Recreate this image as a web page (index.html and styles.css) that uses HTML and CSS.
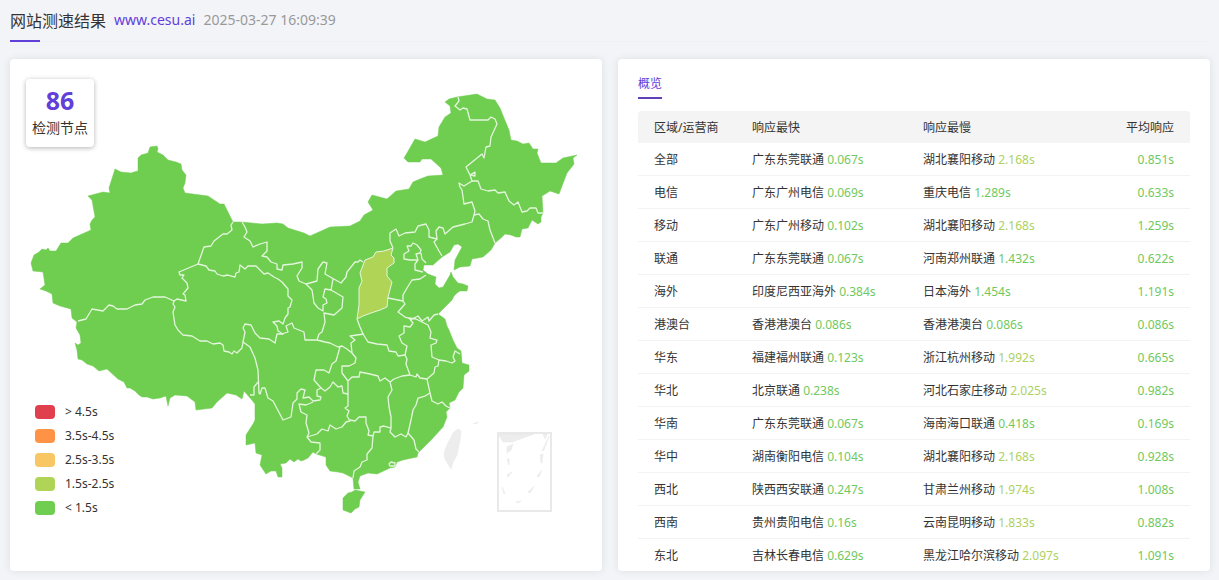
FILE: index.html
```
<!DOCTYPE html>
<html lang="zh-CN">
<head>
    <meta charset="UTF-8">
    <meta name="viewport" content="width=device-width, initial-scale=1.0">
    <title>网站测速结果</title>
    <link rel="stylesheet" href="styles.css">
</head>
<body>
    <div class="header">
        <h1>网站测速结果</h1>
        <a href="#">www.cesu.ai</a>
        <span class="time">2025-03-27 16:09:39</span>
    </div>
    <div class="content">
        <div class="card map-card">
            <div class="node-count">
                <strong>86</strong>
                <span>检测节点</span>
            </div>
            <svg class="map" viewBox="10 59 592 512" role="img" aria-label="中国地图">
                <!-- mainland -->
                <path class="land" d="M31 263L34 255 39 252 42 249 46 250 48 248 50 251 56 251 61 243 68 243 73 238 91 230 90 224 92 220 95 217 92 200 88 196 103 192 110 193 109 188 115 169 121 172 131 173 134 172 138 171 138 158 141 155 148 153 150 147 157 146 158 149 157 152 163 155 168 160 176 162 181 164 182 170 186 175 185 183 183 188 185 193 208 196 220 204 224 204 227 210 233 222 242 222 262 224 277 223 283 224 288 228 304 233 310 236 330 227 350 226 360 221 364 215 373 210 368 202 372 195 387 199 396 191 409 189 413 182 420 179 428 176 443 175 441 168 431 159 422 159 420 162 408 162 404 158 407 153 415 139 425 142 438 136 439 127 445 117 451 113 450 106 445 102 449 99 457 97 477 94 487 99 495 100 500 108 504 118 509 130 511 140 517 141 523 144 529 143 533 149 538 149 537 153 541 163 556 163 563 158 577 155 573 158 574 164 567 173 559 194 550 191 542 196 543 213 541 217 541 222 538 224 532 220 528 228 522 229 520 237 516 237 511 235 505 234 501 238 495 243 491 250 483 257 472 259 470 266 460 267 454 270 455 260 462 247 458 244 454 245 450 252 442 257 433 265 424 265 423 270 428 274 436 277 435 284 439 288 443 287 450 275 451 272 453 277 458 283 463 284 468 286 467 291 460 291 457 293 454 296 452 300 443 309 438 314 445 319 447 326 449 330 453 340 457 348 461 351 462 363 469 365 469 371 464 375 463 388 459 392 455 400 449 403 450 408 446 412 447 417 443 427 432 439 425 446 418 453 417 457 412 458 403 460 397 462 395 467 390 468 377 474 368 473 360 476 358 482 360 489 354 489 353 478 347 475 343 473 338 472 330 471 326 465 326 457 316 454 313 452 308 458 304 460 301 461 298 459 294 462 290 459 286 463 280 464 282 468 282 477 278 477 276 471 271 471 266 474 260 465 262 455 256 453 255 443 246 445 246 435 253 424 255 420 255 404 251 399 244 391 242 399 236 395 227 393 217 402 212 408 196 410 195 402 187 396 175 395 170 398 168 406 166 396 160 398 153 399 147 397 142 397 139 395 135 391 130 388 127 388 124 382 118 379 107 369 99 371 93 366 87 364 82 360 78 359 77 350 75 343 78 345 81 343 80 335 76 328 77 322 72 318 71 309 60 306 53 303 52 294 46 291 40 289 45 285 43 272 33 271 31 263z"/>
                <path class="land" d="M352 492L355 490 365 492 360 500 359 507 355 509 351 513 343 510 343 498 348 493z"/>
                <path class="shanxi" d="M357 319L359 305 359 288 362 281 360 273 365 260 373 257 376 252 384 251 393 248 391 255 394 258 394 263 387 268 387 276 392 282 388 297 387 307 380 310 371 313 363 316z"/>
                <!-- province borders -->
                <path class="border" d="M78 321L86 319 92 309 103 311 109 305 113 306 117 309 127 309 135 305 142 304 145 300 153 297 165 297 174 301 177 299 186 301 185 295 183 294 188 288 187 283 182 278 184 275 180 275 179 272 198 264 204 247 211 246 214 241 223 234 227 234 232 230 231 225 233 222"/>
                <path class="border" d="M198 264L202 265 206 266 209 270 215 271 217 274 223 276 228 275 235 277 236 273 239 272 240 265 245 269 248 266 256 266 260 270 264 274 268 273 274 277 278 279 282 282 288 289 288 296 292 300 290 307 288 308 288 314 285 318 283 324 279 321 273 322 277 326 278 331 283 334 277 334 275 343 269 339 260 338 255 333 251 325 245 324 243 328 245 332 243 342"/>
                <path class="border" d="M242 222L245 227 247 232 244 237 250 241 253 247 260 244 267 242 267 251 262 256 267 257 271 262 277 264 277 269 282 270 283 265 293 264 302 262 302 268 297 276 299 281 306 284 317 281 318 269 323 262 327 263 325 274 332 278 341 283 346 277 347 272 355 262 358 262 360 260 363 262"/>
                <path class="border" d="M306 284L312 290 314 303 318 308 323 311 323 305 327 303 326 299 323 297 325 289 331 290 333 279"/>
                <path class="border" d="M331 290L343 297 342 308 334 315 324 313 325 322 322 332 319 334 317 340 305 340 304 332 294 328 292 323 286 326 288 332 282 334"/>
                <path class="border" d="M317 340L325 342 330 343 338 347 342 346 347 349 352 353"/>
                <path class="border" d="M174 301L173 304 175 307 173 312 175 325 178 330 183 335 192 336 200 341 207 341 213 344 220 343 223 345 224 351 229 352 232 354 234 351 237 353 242 348 243 342 250 347 255 358 258 370 259 393 260 394 262 388 265 388 268 398 273 401 283 420 291 417 293 403 297 399 297 393 301 389 305 390 303 398 309 397 313 401 320 400 321 397 317 396 317 390 321 388 314 380 316 370 324 370 329 373 332 364 336 361 340 347"/>
                <path class="border" d="M258 382L254 387 254 395 250 395"/>
                <path class="border" d="M321 388L325 391 330 387 333 382 338 387 342 386 343 393 348 394 348 381 342 373 342 366 349 366 355 363 356 358 352 353 351 343 355 340 350 336 364 334"/>
                <path class="border" d="M313 402L306 405 299 404 301 412 307 415 306 423 309 433 307 437 317 434 322 429 328 431 330 425 336 429 342 427 346 422 350 421 347 416 349 411 345 408 348 406 348 394"/>
                <path class="border" d="M307 437L311 442 320 443 320 450 316 454"/>
                <path class="border" d="M350 420L355 421 359 417 366 417 366 423 369 431 368 435 373 436 372 448 367 454 367 460 362 462 360 467 354 471 353 478"/>
                <path class="border" d="M373 436L374 432 380 432 380 427 384 426 391 428 390 432 395 437 401 434 406 437 408 433 414 440 416 449 419 452"/>
                <path class="border" d="M348 381L352 377 359 377 360 372 370 374 378 376 380 381 385 378 390 382 392 390 388 397 389 407 391 417 391 428"/>
                <path class="border" d="M390 382L394 379 402 376 410 375 416 377 417 374 420 378 427 379 430 393 425 396 418 398 416 405 413 410 411 420 408 433"/>
                <path class="border" d="M430 393L432 401 438 404 442 402 446 406 450 408"/>
                <path class="border" d="M427 379L434 373 435 367 438 366 439 360 446 361 452 363 455 361 453 357 455 351 460 354"/>
                <path class="border" d="M357 319L360 327 363 334 368 342 377 344 387 345 389 351 396 352 398 356 405 355 407 359 406 364 410 375"/>
                <path class="border" d="M405 355L407 346 402 343 399 336 404 333 404 326 410 327 413 323 409 318 416 319 422 322 428 325 431 332 430 338 437 340 436 343 431 345 432 357 439 360"/>
                <path class="border" d="M388 298L403 301 403 295 407 288 412 280 420 279 426 275"/>
                <path class="border" d="M403 301L405 304 398 312 405 317 412 319 418 316 422 321 428 317 429 321 434 315 438 314"/>
                <path class="border" d="M393 248L390 241 390 233 396 229 399 236 405 233 415 232 418 226 426 224 429 230 429 237 437 239 436 231 439 227 443 228 445 234 453 227 465 224 472 222 474 215 479 214 483 219 488 221 490 230 495 243"/>
                <path class="border" d="M437 239L434 242 439 251 442 256"/>
                <path class="border" d="M413 243L417 245 421 250 420 253 416 254 418 260 410 260 404 259 404 254 409 251 407 246 411 246zM421 253L422 259 426 263M418 260L415 264 415 270 423 272"/>
                <path class="border" d="M474 215L475 211 472 202 464 204 462 190 460 187 459 183 464 186 472 181 470 175 466 167 482 154 484 158 486 147 490 146 491 137 497 124 495 119 491 117 488 120 470 120 467 109 463 108 460 110 455 106 459 101 458 97"/>
                <path class="border" d="M470 175L475 172 475 176 471 175M472 181L478 181 481 189 488 191 495 190 498 193 505 192 509 201 514 205 518 202 522 212 527 211 530 208 536 208 538 213 543 213"/>
                <path class="border" d="M389 464L391 462 395 463 395 466 390 466z"/>
                <!-- no data -->
                <path class="none" d="M453 433L458 429 461 431 460 440 457 455 453 462 451 469 445 459 444 453 447 445zM473 424L478 422 478 423z"/>
                <rect class="inset" x="498" y="433" width="53" height="78"/>
                <path class="none" d="M498 434L534 434 520 439 512 442 503 442zM543 434L547 434 545 439zM507 447L513 444 511 450 507 453zM507 459L509 459 509 465zM507 475L512 472 508 477zM502 487L505 493 504 494zM516 502L521 501 518 503zM528 492L534 486 530 493zM537 476L542 470 539 477zM540 455L543 454 542 463 541 463zM542 451L549 436 544 450z"/>
            </svg>
            <ul class="legend">
                <li><i class="red"></i>&gt; 4.5s</li>
                <li><i class="orange"></i>3.5s-4.5s</li>
                <li><i class="yellow"></i>2.5s-3.5s</li>
                <li><i class="lime"></i>1.5s-2.5s</li>
                <li><i class="green"></i>&lt; 1.5s</li>
            </ul>
        </div>
        <div class="card overview">
            <h2>概览</h2>
            <table>
                <thead>
                    <tr><th>区域/运营商</th><th>响应最快</th><th>响应最慢</th><th>平均响应</th></tr>
                </thead>
                <tbody>
                    <tr><td>全部</td><td>广东东莞联通 <span class="fast">0.067s</span></td><td>湖北襄阳移动 <span class="slow">2.168s</span></td><td>0.851s</td></tr>
                    <tr><td>电信</td><td>广东广州电信 <span class="fast">0.069s</span></td><td>重庆电信 <span class="fast">1.289s</span></td><td>0.633s</td></tr>
                    <tr><td>移动</td><td>广东广州移动 <span class="fast">0.102s</span></td><td>湖北襄阳移动 <span class="slow">2.168s</span></td><td>1.259s</td></tr>
                    <tr><td>联通</td><td>广东东莞联通 <span class="fast">0.067s</span></td><td>河南郑州联通 <span class="fast">1.432s</span></td><td>0.622s</td></tr>
                    <tr><td>海外</td><td>印度尼西亚海外 <span class="fast">0.384s</span></td><td>日本海外 <span class="fast">1.454s</span></td><td>1.191s</td></tr>
                    <tr><td>港澳台</td><td>香港港澳台 <span class="fast">0.086s</span></td><td>香港港澳台 <span class="fast">0.086s</span></td><td>0.086s</td></tr>
                    <tr><td>华东</td><td>福建福州联通 <span class="fast">0.123s</span></td><td>浙江杭州移动 <span class="slow">1.992s</span></td><td>0.665s</td></tr>
                    <tr><td>华北</td><td>北京联通 <span class="fast">0.238s</span></td><td>河北石家庄移动 <span class="slow">2.025s</span></td><td>0.982s</td></tr>
                    <tr><td>华南</td><td>广东东莞联通 <span class="fast">0.067s</span></td><td>海南海口联通 <span class="fast">0.418s</span></td><td>0.169s</td></tr>
                    <tr><td>华中</td><td>湖南衡阳电信 <span class="fast">0.104s</span></td><td>湖北襄阳移动 <span class="slow">2.168s</span></td><td>0.928s</td></tr>
                    <tr><td>西北</td><td>陕西西安联通 <span class="fast">0.247s</span></td><td>甘肃兰州移动 <span class="slow">1.974s</span></td><td>1.008s</td></tr>
                    <tr><td>西南</td><td>贵州贵阳电信 <span class="fast">0.16s</span></td><td>云南昆明移动 <span class="slow">1.833s</span></td><td>0.882s</td></tr>
                    <tr><td>东北</td><td>吉林长春电信 <span class="fast">0.629s</span></td><td>黑龙江哈尔滨移动 <span class="slow">2.097s</span></td><td>1.091s</td></tr>
                </tbody>
            </table>
        </div>
    </div>
</body>
</html>
```
FILE: styles.css
```
* {
    box-sizing: border-box;
}
body {
    margin: 0;
    padding: 0 9px 9px 10px;
    background-color: #f3f4f8;
    color: #333;
    font-family: "Noto Sans", "Noto Sans CJK SC", sans-serif;
    font-size: 12px;
}
.header {
    position: relative;
    display: flex;
    align-items: center;
    gap: 8px;
    height: 42px;
    margin-bottom: 17px;
    padding-bottom: 2px;
    border-bottom: 1px solid #f0f1f5;
    font-size: 14px;
}
.header::after {
    content: "";
    position: absolute;
    left: 0;
    bottom: -1px;
    width: 30px;
    height: 2px;
    background-color: #6040d8;
}
.header h1 {
    margin: 0;
    font-size: 16px;
    font-weight: normal;
}
.header a {
    color: #6040d8;
    text-decoration: none;
}
.time {
    color: #999;
}
.content {
    display: grid;
    grid-template-columns: 1fr 1fr;
    gap: 16px;
}
.card {
    position: relative;
    background-color: #fff;
    border-radius: 4px;
    box-shadow: 0 0 8px rgba(0, 0, 0, 0.09);
}
.node-count {
    position: absolute;
    left: 16px;
    top: 20px;
    display: flex;
    flex-direction: column;
    align-items: center;
    width: 68px;
    height: 68px;
    padding-top: 6px;
    border-radius: 4px;
    background-color: #fff;
    box-shadow: 0 1px 5px rgba(0, 0, 0, 0.3);
    font-size: 14px;
    line-height: 24px;
}
.node-count strong {
    color: #6040d8;
    font-size: 25px;
    line-height: 31px;
}
.map {
    display: block;
    width: 100%;
}
.land, .shanxi {
    fill: #6fcd50;
    stroke: #6fcd50;
    stroke-width: 0.5;
}
.shanxi {
    fill: #b0d556;
    stroke: #e8f5df;
    stroke-width: 1;
}
.border {
    fill: none;
    stroke: #e3f6dc;
    stroke-width: 1.3;
    stroke-linejoin: round;
}
.none {
    fill: #ededed;
    stroke: #e6e6e6;
    stroke-width: 0.5;
}
.inset {
    fill: none;
    stroke: #e9e9e9;
    stroke-width: 2;
}
.legend {
    position: absolute;
    left: 25px;
    bottom: 52px;
    margin: 0;
    padding: 0;
    list-style: none;
}
.legend li {
    display: flex;
    align-items: center;
    gap: 10px;
    height: 24px;
}
.legend i {
    width: 20px;
    height: 14px;
    margin-top: 1px;
    border-radius: 4px;
}
.red {
    background-color: #e0404e;
}
.orange {
    background-color: #ff9345;
}
.yellow {
    background-color: #f8c763;
}
.lime {
    background-color: #b0d556;
}
.green {
    background-color: #6fcd50;
}
.overview {
    padding: 14px 20px 0;
}
.overview h2 {
    width: max-content;
    height: 26px;
    margin: 0 0 12px;
    border-bottom: 2px solid #6040b8;
    color: #6040d8;
    font-size: 12px;
    font-weight: normal;
    line-height: 22px;
}
table {
    width: 100%;
    border-collapse: separate;
    border-spacing: 0;
    table-layout: fixed;
}
th, td {
    height: 33px;
    padding: 2px 0 0 16px;
    border-bottom: 1px solid #f3f3f3;
    text-align: left;
    font-weight: normal;
    line-height: 16px;
    white-space: nowrap;
}
th {
    height: 32px;
    border: 0;
    background-color: #f4f4f4;
}
th:first-child {
    width: 98px;
    border-radius: 4px 0 0 0;
}
th:nth-child(2), th:nth-child(3) {
    width: 31%;
}
th:last-child, td:last-child {
    padding: 2px 16px 0 0;
    text-align: right;
}
th:last-child {
    border-radius: 0 4px 0 0;
}
tr:last-child td {
    height: 32px;
    border: 0;
}
td:last-child, .fast {
    color: #70c960;
}
.slow {
    color: #add15f;
}
```
